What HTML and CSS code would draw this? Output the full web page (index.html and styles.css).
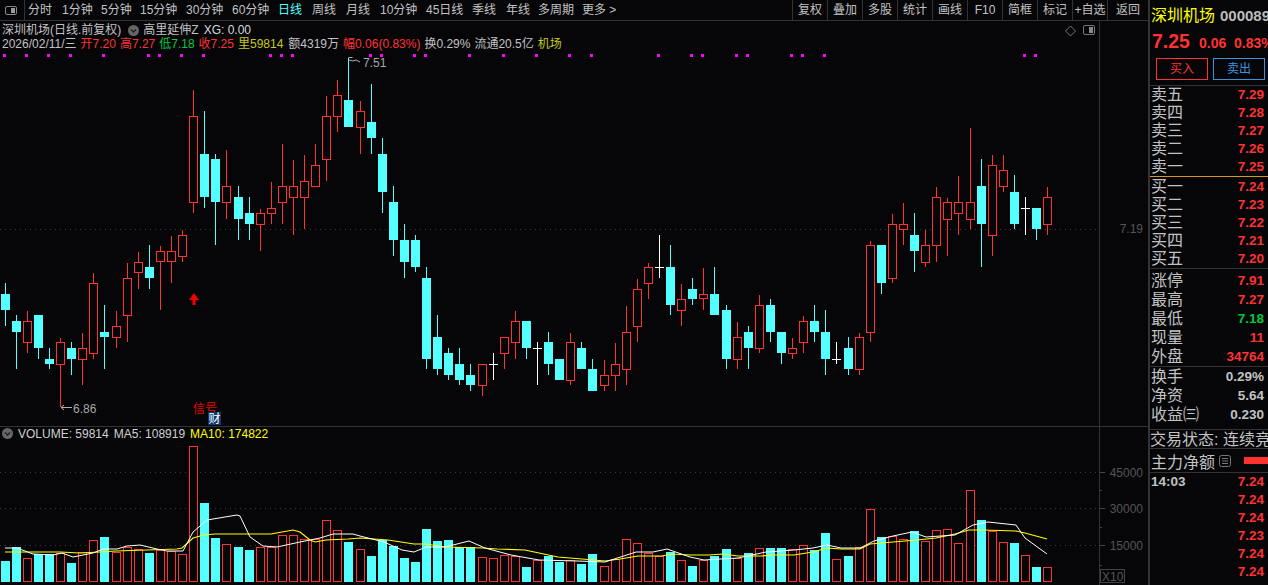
FILE: index.html
```html
<!DOCTYPE html>
<html lang="zh-CN">
<head>
<meta charset="utf-8">
<title>深圳机场 K线</title>
<link rel="stylesheet" href="styles.css">
</head>
<body>
<div class="app">
  <section class="chart-col">
    <header class="toolbar">
      <div class="tb-icon"><span class="panel-icon"><i></i></span></div>
      <nav class="periods">
        <span class="w2">分时</span><span class="w3">1分钟</span><span class="w3">5分钟</span><span class="w4">15分钟</span><span class="w4">30分钟</span><span class="w4">60分钟</span><span class="w2 active">日线</span><span class="w2">周线</span><span class="w2">月线</span><span class="w4">10分钟</span><span class="w4">45日线</span><span class="w2">季线</span><span class="w2">年线</span><span class="w4 tight">多周期</span><span class="more">更多 &gt;</span>
      </nav>
      <div class="actions">
        <span>复权</span><span>叠加</span><span>多股</span><span>统计</span><span>画线</span><span>F10</span><span>简框</span><span>标记</span><span>+自选</span><span class="last">返回</span>
      </div>
    </header>

    <div class="pane pane-main">
      <svg class="plot" viewBox="0 21 1148 405" width="1148" height="405">
        <line class="grid" x1="0" x2="1099" y1="229.5" y2="229.5"/>
        <line class="axis-line" x1="1099.5" x2="1099.5" y1="21" y2="426"/>
        <text class="axis-label" x="1143" y="233">7.19</text>
        <g id="dots"></g>
        <g id="candles"></g>
        <path class="note-line" d="M348.5 57.5h4M349 60l4 1 3-1 4 2"/>
        <text class="note" x="363" y="67">7.51</text>
        <path class="note-line" d="M72 407.5H61M64 405l-3 2.5 3 2.5"/>
        <text class="note" x="73" y="413">6.86</text>
        <path class="up-arrow" d="M194 293l5 7h-3.500v5h-3v-5H189z"/>
        <text class="signal" x="193" y="413">信号</text>
        <rect class="cai-box" x="208" y="412" width="13" height="13"/>
        <text class="cai" x="208.500" y="423">财</text>
        <path class="diamond" d="M1070.500 26l5 5-5 5-5-5z"/>
        <rect class="box-icon" x="1083.500" y="25.500" width="11" height="9" rx="1.500"/>
        <rect class="box-fill" x="1089" y="27" width="4" height="6"/>
      </svg>
      <div class="legend">
        <div class="legend-row title-row">
          <span>深圳机场(日线.前复权)</span>
          <span class="round-icon"><svg viewBox="0 0 11 11" width="11" height="11"><path d="M3 4.500l2.500 2.500L8 4.500"/></svg></span>
          <span>高里延伸Z</span>
          <span class="xg">XG: 0.00</span>
        </div>
        <div class="legend-row quote">
          <span>2026/02/11/三</span>
          <span class="red">开7.20</span>
          <span class="red">高7.27</span>
          <span class="green">低7.18</span>
          <span class="red">收7.25</span>
          <span class="olive">里59814</span>
          <span class="amount">额4319万</span>
          <span class="red">幅0.06(0.83%)</span>
          <span>换0.29%</span>
          <span>流通20.5亿</span>
          <span class="olive">机场</span>
        </div>
      </div>
    </div>

    <div class="pane pane-vol">
      <svg class="plot" viewBox="0 427 1148 158" width="1148" height="158">
        <line class="grid" x1="0" x2="1099" y1="472.500" y2="472.500"/>
        <line class="grid" x1="0" x2="1099" y1="508.500" y2="508.500"/>
        <line class="grid" x1="0" x2="1099" y1="545.500" y2="545.500"/>
        <line class="axis-line" x1="1099.500" x2="1099.500" y1="427" y2="585"/>
        <path class="tick" d="M1100 472.500h5M1100 508.500h5M1100 545.500h5M1100 490.500h2M1100 527.500h2M1100 565.500h2"/>
        <text class="axis-label" x="1143" y="477">45000</text>
        <text class="axis-label" x="1143" y="513">30000</text>
        <text class="axis-label" x="1143" y="550">15000</text>
        <rect class="x10-box" x="1100.500" y="569.500" width="24" height="13"/>
        <text class="x10" x="1102" y="581">X10</text>
        <g id="bars"></g>
        <polyline class="ma10" id="ma10"/>
        <polyline class="ma5" id="ma5"/>
      </svg>
      <div class="legend">
        <div class="legend-row vol-row">
          <span class="round-icon"><svg viewBox="0 0 11 11" width="11" height="11"><path d="M3 4.500l2.500 2.500L8 4.500"/></svg></span>
          <span class="vol-text">VOLUME: 59814</span>
          <span class="vol-text">MA5: 108919</span>
          <span class="yellow">MA10: 174822</span>
        </div>
      </div>
    </div>
  </section>

  <aside class="side">
    <div class="stock"><span class="stock-name">深圳机场</span><span class="stock-code">000089</span></div>
    <div class="price"><span class="price-now">7.25</span><span>0.06</span><span>0.83%</span></div>
    <div class="trade"><span class="btn btn-buy">买入</span><span class="btn btn-sell">卖出</span></div>

    <div class="rows asks">
      <div class="row"><span>卖五</span><b class="red">7.29</b></div>
      <div class="row"><span>卖四</span><b class="red">7.28</b></div>
      <div class="row"><span>卖三</span><b class="red">7.27</b></div>
      <div class="row"><span>卖二</span><b class="red">7.26</b></div>
      <div class="row"><span>卖一</span><b class="red">7.25</b></div>
    </div>
    <div class="rows bids">
      <div class="row"><span>买一</span><b class="red">7.24</b></div>
      <div class="row"><span>买二</span><b class="red">7.23</b></div>
      <div class="row"><span>买三</span><b class="red">7.22</b></div>
      <div class="row"><span>买四</span><b class="red">7.21</b></div>
      <div class="row"><span>买五</span><b class="red">7.20</b></div>
    </div>
    <div class="rows stats">
      <div class="row"><span>涨停</span><b class="red">7.91</b></div>
      <div class="row"><span>最高</span><b class="red">7.27</b></div>
      <div class="row"><span>最低</span><b class="green">7.18</b></div>
      <div class="row"><span>现量</span><b class="red">11</b></div>
      <div class="row"><span>外盘</span><b class="red">34764</b></div>
    </div>
    <div class="rows stats2">
      <div class="row"><span>换手</span><b>0.29%</b></div>
      <div class="row"><span>净资</span><b>5.64</b></div>
      <div class="row"><span>收益㈢</span><b>0.230</b></div>
    </div>
    <div class="status">交易状态: 连续竞价</div>
    <div class="flow">
      <span>主力净额</span>
      <svg class="list-icon" viewBox="0 0 12 12" width="12" height="12"><rect x=".5" y=".5" width="11" height="11" rx="2"/><path d="M3 3.500h6M3 6h6M3 8.500h6"/></svg>
      <i class="flow-bar"></i>
    </div>
    <div class="ticks">
      <div class="row"><b>14:03</b><b class="red">7.24</b></div>
      <div class="row"><span></span><b class="red">7.24</b></div>
      <div class="row"><span></span><b class="red">7.24</b></div>
      <div class="row"><span></span><b class="red">7.23</b></div>
      <div class="row"><span></span><b class="red">7.24</b></div>
      <div class="row"><span></span><b class="red">7.24</b></div>
    </div>
  </aside>
</div>
<script src="chart.js"></script>
</body>
</html>
```
FILE: styles.css
```css
* { box-sizing: border-box; }
html, body { margin: 0; height: 100%; background: #060609; overflow: hidden; }
body {
  font-family: "Liberation Sans", "Noto Sans CJK SC", sans-serif;
  font-size: 12px;
  color: #c2c2c2;
}
.app { display: flex; width: 1268px; height: 585px; }
.chart-col { width: 1148px; flex: none; display: flex; flex-direction: column; }

/* toolbar */
.toolbar {
  height: 21px; flex: none; display: flex; align-items: stretch;
  border-bottom: 1px solid #333;
  line-height: 20px;
}
.tb-icon {
  width: 25px; flex: none; border-right: 1px solid #333;
  display: flex; align-items: center; padding-left: 5px;
}
.panel-icon {
  display: flex; justify-content: flex-end; width: 12px; height: 9px;
  border: 1px solid #888; border-radius: 2px; padding: 1px;
}
.panel-icon i { display: block; width: 4px; background: #999; }
.periods { display: flex; gap: 10px; padding-left: 3px; white-space: nowrap; }
.periods span { flex: none; min-width: 0; }
.w2 { width: 24px; }
.w3 { width: 29px; }
.w4 { width: 36px; }
.tight { margin-left: -2px; margin-right: -2px; }
.active { color: #54ffff; }
.actions { display: flex; margin-left: auto; }
.actions span { width: 35px; text-align: center; border-left: 1px solid #333; white-space: nowrap; }
.actions .last { width: 41px; }

/* chart panes */
.pane { position: relative; flex: none; }
.pane-main { height: 406px; border-bottom: 1px solid #333; }
.pane-vol { height: 158px; }
.plot { position: absolute; left: 0; top: 0; display: block; }
.legend { position: relative; padding: 2px 0 0 2px; }
.legend-row { display: flex; align-items: center; height: 14px; line-height: 14px; white-space: nowrap; }
.title-row { gap: 4px; }
.title-row .round-icon { margin-left: 3px; }
.quote { gap: 4px; }
.amount { margin-left: 1px; }
.round-icon {
  width: 11px; height: 11px; border-radius: 50%; background: #666;
  display: block; flex: none;
}
.round-icon svg { display: block; fill: none; stroke: #222; stroke-width: 1.4; }
.xg { color: #d8d8d8; margin-left: 1px; }
.pane-vol .legend { padding: 0; }
.vol-row .round-icon { margin: 0 5px 2px 2px; }
.vol-text { margin-right: 5px; color: #d0d0d0; }
.yellow { color: #ffff00; }
.red { color: #ff3232; }
.green { color: #00c840; }
.olive { color: #c8c81e; }

/* svg marks */
.grid { stroke: #3c3c3c; stroke-width: 1; stroke-dasharray: 1 4; }
.axis-line { stroke: #333; stroke-width: 1; }
.tick { stroke: #444; fill: none; }
.axis-label { fill: #555; font-size: 12px; text-anchor: end; }
.x10-box { fill: none; stroke: #444; }
.x10 { fill: #555; font-size: 12px; }
.c-wick { stroke: #54ffff; shape-rendering: crispEdges; }
.c-body { fill: #54ffff; shape-rendering: crispEdges; }
.r-wick { stroke: #ff3232; shape-rendering: crispEdges; }
.r-body { fill: #060609; stroke: #ff3232; shape-rendering: crispEdges; }
.w-line { stroke: #fff; shape-rendering: crispEdges; }
.dot { fill: #ff00ff; }
.note { fill: #a8a8a8; font-size: 12px; }
.note-line { fill: none; stroke: #b0b0b0; stroke-width: 1; }
.up-arrow { fill: #f00000; }
.signal { fill: #f00000; font-size: 12px; }
.cai-box { fill: #0a3a72; }
.cai { fill: #fff; font-size: 12px; }
.diamond, .box-icon { fill: none; stroke: #777; }
.box-fill { fill: #888; }
.ma5 { fill: none; stroke: #fff; stroke-width: 1; }
.ma10 { fill: none; stroke: #ffff00; stroke-width: 1.2; }

/* side panel */
.side {
  width: 120px; flex: none; border-left: 2px solid #333;
  overflow: hidden; font-size: 16px;
}
.stock { height: 31px; line-height: 31px; display: flex; padding-left: 1px; white-space: nowrap; }
.stock-name { color: #ffff00; font-size: 16px; width: 69px; flex: none; }
.stock-code { font-size: 15px; font-weight: bold; color: #bdbdbd; }
.price {
  height: 21px; line-height: 21px; display: flex; align-items: baseline;
  color: #ff3232; font-size: 14px; font-weight: bold; white-space: nowrap; padding-left: 2px;
}
.price-now { font-size: 19.500px; width: 47px; flex: none; }
.price span:nth-child(2) { width: 35px; flex: none; }
.trade {
  height: 34px; padding: 6px 0 0 6px; display: flex; gap: 5px;
  border-bottom: 1px solid #333;
}
.btn { width: 52px; height: 22px; line-height: 20px; text-align: center; font-size: 12px; border: 1px solid; }
.btn-buy { color: #ff3232; border-color: #ff3232; }
.btn-sell { color: #3a92e0; border-color: #3a92e0; }
.row {
  display: flex; justify-content: space-between; align-items: center;
  padding: 0 4px 0 1px; white-space: nowrap;
}
.row b { font-size: 13.500px; font-weight: bold; }
.asks .row, .bids .row, .ticks .row { height: 18px; line-height: 18px; }
.asks { height: 91px; border-bottom: 1px solid #d79a20; padding-bottom: 0; }
.bids { height: 92px; padding-top: 1px; border-bottom: 1px solid #333; }
.stats .row, .stats2 .row { height: 19px; line-height: 19px; }
.stats { height: 98px; padding-top: 2px; border-bottom: 1px solid #333; }
.stats2 { height: 63px; border-bottom: 1px solid #333; }
.status {
  height: 19px; line-height: 19px; padding-left: 0; white-space: nowrap;
  border-bottom: 1px solid #333;
}
.flow {
  height: 24px; display: flex; align-items: center; padding-left: 1px;
  border-bottom: 1px solid #333; white-space: nowrap;
}
.list-icon { flex: none; margin-left: 4px; fill: none; stroke: #777; }
.flow-bar { display: block; width: 24px; height: 7px; margin-left: 13px; background: #ff3232; flex: none; }
.ticks .row b:first-child { color: #c2c2c2; }
```
FILE: chart.js
```js
// t, wick top, body top, body bottom, wick bottom, volume top
var K = [
['c',283,294,310,326,561],['c',315,321,332,369,547],['r',311,321,343,353,558],['c',315,315,348,359,554],
['c',348,359,364,369,554],['r',338,342,365,407,553],['c',342,348,359,375,563],['r',333,348,360,385,552],
['r',273,283,354,359,540],['c',305,332,337,369,537],['r',311,326,338,348,552],['r',263,278,316,342,547],
['r',252,262,273,289,549],['c',245,267,278,289,553],['r',246,251,262,310,550],['r',236,251,262,283,551],
['r',230,235,257,262,554],['r',90,116,203,213,446],['c',111,154,197,208,503],['c',154,159,202,245,538],
['r',150,186,203,219,544],['c',186,197,219,240,547],['c',197,213,224,240,550],['r',209,213,225,251,547],
['r',182,208,214,224,547],['r',144,186,203,224,535],['r',160,186,198,235,535],['r',155,181,198,229,539],
['r',144,165,187,187,539],['r',96,116,160,181,520],['r',80,95,117,132,530],['c',58,100,127,127,542],
['r',101,111,128,154,549],['c',84,122,138,154,556],['c',138,154,192,213,540],['c',186,202,240,256,546],
['c',224,240,262,278,558],['c',235,240,267,272,562],['c',267,278,359,369,529],['c',315,337,369,375,541],
['c',348,353,375,380,540],['c',348,364,380,385,547],['c',364,375,385,391,547],['r',364,364,386,396,557],
['w',353,364,364,380,558],['r',337,337,354,369,555],['r',311,321,343,359,556],['c',321,321,348,359,567],
['w',342,348,348,385,560],['c',332,342,364,375,556],['c',359,359,380,380,562],['r',333,342,381,385,560],
['c',342,348,369,369,564],['c',359,369,391,391,554],['r',360,375,386,391,566],['r',343,364,376,391,559],
['r',306,332,370,385,539],['r',279,289,327,342,543],['r',263,267,284,299,553],['w',235,267,267,278,556],
['c',245,267,305,315,552],['r',284,299,311,326,560],['c',278,289,299,305,566],['r',268,294,299,310,560],
['c',267,294,315,315,556],['c',305,310,359,369,549],['r',322,337,360,369,558],['c',326,332,348,369,553],
['r',295,305,349,353,548],['c',299,305,332,342,548],['c',332,332,353,364,548],['r',338,348,354,359,549],
['r',316,321,343,353,545],['c',305,321,332,342,550],['c',310,332,359,375,533],['w',342,359,359,364,559],
['c',337,348,369,375,556],['r',333,337,370,375,547],['r',241,245,333,342,509],['c',245,245,283,294,537],
['r',214,224,279,283,536],['r',203,224,230,245,539],['c',213,235,251,272,531],['r',230,245,263,267,541],
['r',187,197,246,262,530],['r',198,202,220,256,529],['r',176,202,214,235,543],['r',128,202,220,229,490],
['c',159,186,224,267,520],['r',155,165,236,256,531],['r',155,170,187,192,542],['c',175,192,224,229,543],
['w',197,208,208,235,555],['c',208,208,229,240,567],['r',187,197,225,235,567]
];
var DOTS = [0,2,4,6,9,13,14,16,18,24,25,26,33,34,37,38,42,45,48,51,53,59,62,63,66,67,71,72,74,92,93];
var BASE = 582;
var MA5 = [[5,548],[17,548],[33,554],[53,555],[62,553],[73,557],[93,553],[103,549],[117,549],[127,546],[140,545],[157,549],[167,551],[183,551],[193,532],[207,520],[237,515],[240,516],[250,537],[263,546],[277,547],[300,542],[320,538],[333,534],[353,534],[360,536],[384,542],[402,550],[414,552],[426,547],[445,547],[469,541],[485,548],[511,555],[539,560],[577,561],[605,562],[636,552],[653,552],[667,549],[690,557],[704,560],[738,558],[766,552],[794,550],[813,548],[827,545],[841,548],[860,548],[874,541],[893,536],[912,532],[926,537],[955,535],[973,525],[988,522],[1016,525],[1025,538],[1047,554]];
var MA10 = [[5,552],[60,552],[80,553],[100,552],[116,551],[177,549],[182,548],[193,538],[204,535],[215,534],[226,534],[271,534],[282,532],[293,530],[300,532],[310,540],[315,542],[326,540],[348,539],[360,538],[388,540],[414,544],[426,544],[445,547],[483,548],[497,549],[525,550],[539,553],[558,557],[582,559],[605,561],[620,559],[638,556],[662,556],[671,554],[690,555],[709,555],[723,554],[738,556],[761,556],[775,555],[794,555],[813,552],[827,548],[841,549],[860,549],[870,544],[893,542],[917,540],[936,538],[955,534],[969,530],[983,530],[1016,531],[1025,533],[1047,539]];

function xOf(i) { return 5 + 11 * i + Math.floor((i + 1) / 11); }

var candles = '', bars = '', dots = '';
K.forEach(function (k, i) {
  var x = xOf(i), t = k[0], top = k[1], a = k[2], b = k[3], bot = k[4], v = k[5];
  var lx = x + 0.5;
  if (t === 'c') {
    candles += '<line class="c-wick" x1="' + lx + '" x2="' + lx + '" y1="' + top + '" y2="' + bot + '"/>';
    candles += '<rect class="c-body" x="' + (x - 4) + '" y="' + a + '" width="9" height="' + (b - a) + '"/>';
    bars += '<rect class="c-body" x="' + (x - 4) + '" y="' + v + '" width="9" height="' + (BASE - v) + '"/>';
  } else if (t === 'r') {
    candles += '<line class="r-wick" x1="' + lx + '" x2="' + lx + '" y1="' + top + '" y2="' + bot + '"/>';
    candles += '<rect class="r-body" x="' + (x - 3.5) + '" y="' + (a + 0.5) + '" width="8" height="' + (b - a - 1) + '"/>';
    bars += '<rect class="r-body" x="' + (x - 3.5) + '" y="' + (v + 0.5) + '" width="8" height="' + (BASE - v - 1) + '"/>';
  } else {
    candles += '<line class="w-line" x1="' + lx + '" x2="' + lx + '" y1="' + top + '" y2="' + bot + '"/>';
    candles += '<line class="w-line" x1="' + (x - 4) + '" x2="' + (x + 5) + '" y1="' + (a + 0.5) + '" y2="' + (a + 0.5) + '"/>';
    bars += '<rect class="r-body" x="' + (x - 3.5) + '" y="' + (v + 0.5) + '" width="8" height="' + (BASE - v - 1) + '"/>';
  }
});
DOTS.forEach(function (i) {
  dots += '<rect class="dot" x="' + (xOf(i) - 2) + '" y="54" width="3" height="3"/>';
});
document.getElementById('candles').innerHTML = candles;
document.getElementById('bars').innerHTML = bars;
document.getElementById('dots').innerHTML = dots;
document.getElementById('ma5').setAttribute('points', MA5.join(' '));
document.getElementById('ma10').setAttribute('points', MA10.join(' '));
```
